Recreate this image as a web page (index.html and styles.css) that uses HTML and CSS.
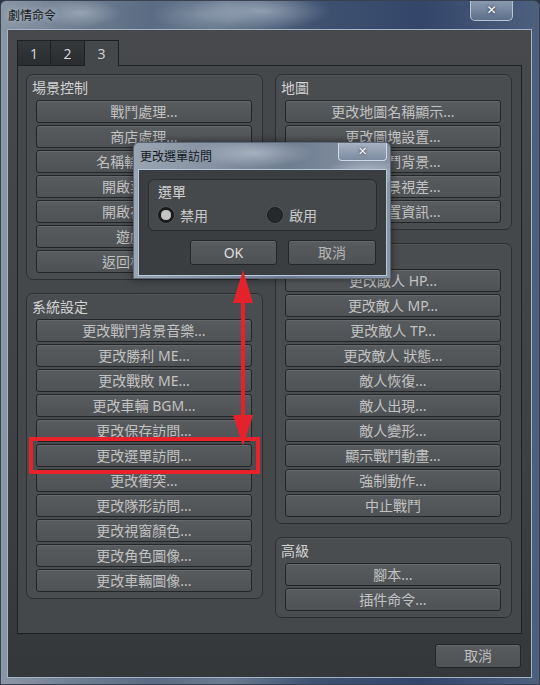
FILE: index.html
```html
<!DOCTYPE html>
<html lang="zh-Hant">
<head>
<meta charset="utf-8">
<title>劇情命令</title>
<link rel="stylesheet" href="styles.css">
</head>
<body>
<div class="window">
  <div class="titlebar">
    <span class="title">劇情命令</span>
    <div class="close">✕</div>
  </div>
  <div class="client">
    <div class="tabs">
      <div class="tab">1</div>
      <div class="tab">2</div>
      <div class="tab active">3</div>
    </div>
    <div class="panel">
      <div class="col">
        <div class="group">
          <div class="gtitle">場景控制</div>
          <div class="btns">
            <button class="btn">戰鬥處理...</button>
            <button class="btn">商店處理...</button>
            <button class="btn">名稱輸入處理...</button>
            <button class="btn">開啟菜單畫面</button>
            <button class="btn">開啟存檔畫面</button>
            <button class="btn">遊戲結束</button>
            <button class="btn">返回標題畫面</button>
          </div>
        </div>
        <div class="group">
          <div class="gtitle">系統設定</div>
          <div class="btns">
            <button class="btn">更改戰鬥背景音樂...</button>
            <button class="btn">更改勝利 ME...</button>
            <button class="btn">更改戰敗 ME...</button>
            <button class="btn">更改車輛 BGM...</button>
            <button class="btn">更改保存訪問...</button>
            <button class="btn">更改選單訪問...</button>
            <button class="btn">更改衝突...</button>
            <button class="btn">更改隊形訪問...</button>
            <button class="btn">更改視窗顏色...</button>
            <button class="btn">更改角色圖像...</button>
            <button class="btn">更改車輛圖像...</button>
          </div>
        </div>
      </div>
      <div class="col">
        <div class="group">
          <div class="gtitle">地圖</div>
          <div class="btns">
            <button class="btn">更改地圖名稱顯示...</button>
            <button class="btn">更改圖塊設置...</button>
            <button class="btn">更改戰鬥背景...</button>
            <button class="btn">更改遠景視差...</button>
            <button class="btn">獲取位置資訊...</button>
          </div>
        </div>
        <div class="group">
          <div class="gtitle">戰鬥</div>
          <div class="btns">
            <button class="btn">更改敵人 HP...</button>
            <button class="btn">更改敵人 MP...</button>
            <button class="btn">更改敵人 TP...</button>
            <button class="btn">更改敵人 狀態...</button>
            <button class="btn">敵人恢復...</button>
            <button class="btn">敵人出現...</button>
            <button class="btn">敵人變形...</button>
            <button class="btn">顯示戰鬥動畫...</button>
            <button class="btn">強制動作...</button>
            <button class="btn">中止戰鬥</button>
          </div>
        </div>
        <div class="group">
          <div class="gtitle">高級</div>
          <div class="btns">
            <button class="btn">腳本...</button>
            <button class="btn">插件命令...</button>
          </div>
        </div>
      </div>
    </div>
    <div class="footer">
      <button class="btn cancel">取消</button>
    </div>
  </div>

  <div class="dialog">
    <div class="dtitlebar">
      <span class="dtitle">更改選單訪問</span>
      <div class="dclose">✕</div>
    </div>
    <div class="dclient">
      <div class="dgroup">
        <div class="dgtitle">選單</div>
        <div class="radios">
          <label class="radio"><span class="dot on"></span>禁用</label>
          <label class="radio"><span class="dot"></span>啟用</label>
        </div>
      </div>
      <div class="dbuttons">
        <button class="btn ok">OK</button>
        <button class="btn dcancel">取消</button>
      </div>
    </div>
  </div>

  <div class="highlight"></div>
  <svg class="arrow" width="26" height="185" viewBox="0 0 26 185">
    <line x1="12" y1="30" x2="12" y2="155" stroke="#e5222b" stroke-width="4"/>
    <polygon points="12,4 2,37 22,37" fill="#e5222b"/>
    <polygon points="12,180 2,149 22,149" fill="#e5222b"/>
  </svg>
</div>
</body>
</html>
```

FILE: styles.css
```css
* { box-sizing: border-box; }
html, body { margin: 0; padding: 0; background: #2b3444; }
body { font-family: "Noto Sans", "Noto Sans CJK TC", sans-serif; }

.window {
  position: relative;
  width: 540px;
  height: 685px;
  display: flex;
  flex-direction: column;
  border: 1px solid #3a4150;
  border-radius: 6px 6px 0 0;
  background:
    radial-gradient(ellipse 70px 18px at 260px 10px, rgba(190,200,214,.55), transparent),
    radial-gradient(ellipse 50px 16px at 200px 14px, rgba(170,182,198,.35), transparent),
    radial-gradient(ellipse 40px 14px at 80px 12px, rgba(200,208,218,.45), transparent),
    linear-gradient(90deg, #8a97a5 0%, #6f7e91 14%, #5a6b83 28%, #6b7b90 42%, #3f5270 58%, #33466a 78%, #4d607e 100%);
  overflow: hidden;
}

.titlebar {
  height: 28px;
  display: flex;
  align-items: flex-start;
  justify-content: space-between;
}
.title {
  margin: 7px 0 0 7px;
  font-size: 12px;
  line-height: 16px;
  color: #161a20;
  text-shadow: 0 0 6px rgba(230,235,240,.7);
}
.close {
  width: 43px;
  height: 20px;
  margin-right: 26px;
  border: 1px solid #b8c4d2;
  border-top: none;
  border-radius: 0 0 5px 5px;
  background: linear-gradient(#8a9ab0, #5d6f8a);
  color: #ffffff;
  font-size: 12px;
  font-weight: bold;
  line-height: 19px;
  text-align: center;
  font-family: "DejaVu Sans", sans-serif;
  text-shadow: 0 0 3px #223;
}

.client {
  flex: 1;
  margin: 0 7px 6px 6px;
  border: 1px solid #a3b4c8;
  background: linear-gradient(#47494c, #3f4245 60%, #35383b);
  padding: 10px 9px 0 9px;
  display: flex;
  flex-direction: column;
}

.tabs {
  display: flex;
  height: 25px;
}
.tab {
  width: 34px;
  height: 25px;
  border: 1px solid #1d1f21;
  border-left: none;
  border-bottom: none;
  background: linear-gradient(#35383b, #2a2c2f);
  color: #dcdcdc;
  font-family: "Open Sans", "Noto Sans", sans-serif;
  font-size: 14px;
  line-height: 25px;
  text-align: center;
}
.tab:first-child { border-left: 1px solid #1d1f21; }
.tab.active {
  background: #45484b;
  height: 26px;
  margin-bottom: -1px;
  position: relative;
  color: #d4d4d4;
}

.panel {
  height: 569px;
  border: 1px solid #1e2022;
  background: #45484b;
  padding: 8px 9px 0 8px;
  display: flex;
  gap: 12px;
}
.col {
  width: 238px;
  display: flex;
  flex-direction: column;
  gap: 13px;
}
.group {
  border: 1px solid #2c2e30;
  border-radius: 7px;
  background: #4a4d50;
  box-shadow: inset 0 1px 0 rgba(255,255,255,.04);
  padding: 0 10px 6px 9px;
}
.gtitle {
  height: 25px;
  margin-left: -4px;
  font-size: 14px;
  line-height: 25px;
  color: #d2d2d2;
}
.btns {
  display: flex;
  flex-direction: column;
  gap: 2px;
}
.btn {
  display: block;
  width: 100%;
  height: 23px;
  margin: 0;
  padding: 0;
  border: 1px solid #232527;
  border-radius: 3px;
  background: linear-gradient(#595c5f, #4f5255);
  box-shadow: inset 0 1px 0 rgba(255,255,255,.08);
  font-family: "Noto Sans", "Noto Sans CJK TC", sans-serif;
  font-size: 14px;
  line-height: 20px;
  color: #c2c2c2;
  text-align: center;
}

.footer {
  display: flex;
  justify-content: flex-end;
  padding: 10px 1px 0 0;
}
.btn.cancel {
  width: 86px;
  height: 24px;
  color: #bdbdbd;
}

/* dialog overlay */
.dialog {
  position: absolute;
  left: 132px;
  top: 141px;
  width: 258px;
  height: 137px;
  border: 1px solid #5d6878;
  border-radius: 6px 6px 0 0;
  background:
    radial-gradient(ellipse 60px 14px at 120px 10px, rgba(210,218,228,.5), transparent),
    radial-gradient(ellipse 40px 14px at 230px 30px, rgba(220,226,234,.5), transparent),
    linear-gradient(90deg, #9aa5b2 0%, #8692a2 30%, #6f7d91 60%, #8995a6 100%);
  box-shadow: 0 0 8px rgba(0,0,0,.55);
  display: flex;
  flex-direction: column;
}
.dtitlebar {
  height: 26px;
  display: flex;
  justify-content: space-between;
  align-items: flex-start;
}
.dtitle {
  margin: 6px 0 0 6px;
  font-size: 12px;
  line-height: 16px;
  color: #15181d;
}
.dclose {
  width: 49px;
  height: 18px;
  margin-right: 3px;
  border: 1px solid #d0dae4;
  border-top: none;
  border-radius: 0 0 4px 4px;
  background: linear-gradient(#a7b3c2, #7c8aa0);
  color: #fff;
  font-size: 11px;
  font-weight: bold;
  line-height: 17px;
  text-align: center;
  font-family: "DejaVu Sans", sans-serif;
  text-shadow: 0 0 3px #223;
}
.dclient {
  flex: 1;
  margin: 0 3px 2px 4px;
  border: 1px solid #b6c8dc;
  background: #3b3e41;
  padding: 9px 9px 0 9px;
}
.dgroup {
  height: 52px;
  border: 1px solid #2a2c2e;
  border-radius: 6px;
  background: #46494c;
  padding: 0 0 0 9px;
}
.dgtitle {
  font-size: 14px;
  line-height: 24px;
  color: #d4d4d4;
}
.radios {
  display: flex;
  height: 22px;
  align-items: center;
}
.radio {
  display: flex;
  align-items: center;
  gap: 6px;
  width: 109px;
  font-size: 14px;
  color: #c8c8c8;
}
.dot {
  width: 16px;
  height: 16px;
  border-radius: 50%;
  background: #26282a;
  border: 1px solid #1b1c1e;
  box-shadow: 0 0 0 1px #505356;
}
.dot.on {
  background: radial-gradient(circle, #c4c4c4 0 4px, #a2a2a2 5px, #1a1b1c 5.5px);
}
.dbuttons {
  display: flex;
  justify-content: flex-end;
  gap: 11px;
  margin-top: 9px;
  padding-right: 1px;
}
.btn.ok {
  width: 87px;
  height: 25px;
  color: #dedede;
}
.btn.dcancel {
  width: 88px;
  height: 25px;
  color: #b5b5b5;
}

.highlight {
  position: absolute;
  left: 28px;
  top: 436px;
  width: 231px;
  height: 37px;
  border: 4px solid #e8212b;
}
.arrow {
  position: absolute;
  left: 230px;
  top: 265px;
}
```
